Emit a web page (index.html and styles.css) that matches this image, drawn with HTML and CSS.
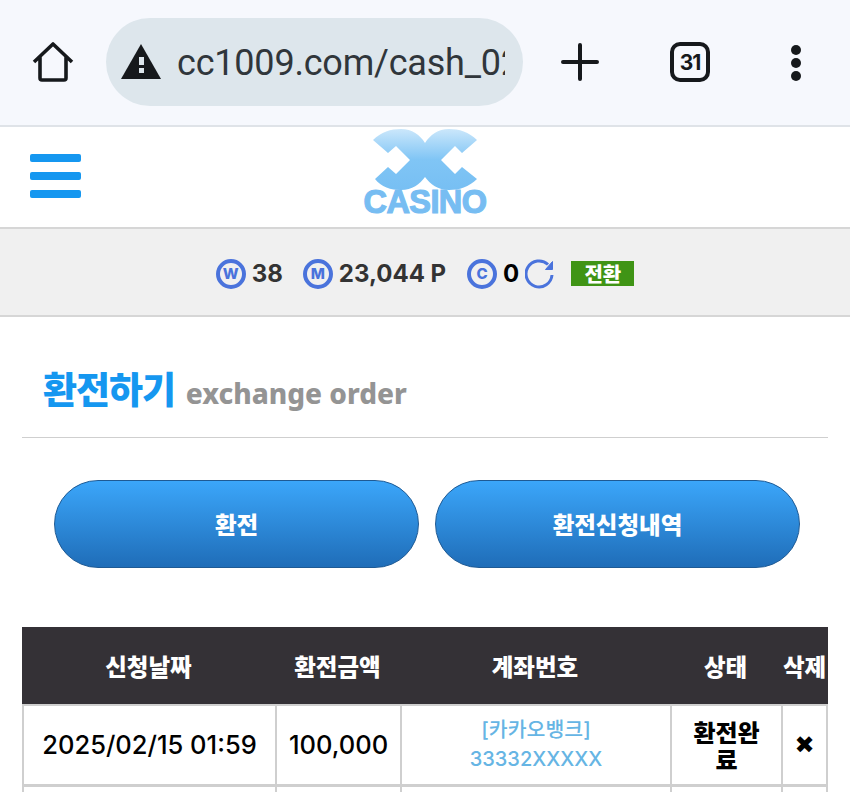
FILE: index.html
```html
<!DOCTYPE html>
<html lang="ko">
<head>
<meta charset="utf-8">
<title>환전하기</title>
<link rel="stylesheet" href="styles.css">
</head>
<body>
<div class="chrome">
  <svg class="ic-home" width="44" height="44" viewBox="0 0 44 44" fill="none" stroke="#16191c" stroke-width="3.6" stroke-linejoin="round"><path d="M3 22 22 4l19 18M9 17v21a2 2 0 0 0 2 2h22a2 2 0 0 0 2-2V17"/></svg>
  <div class="url">
    <svg width="42" height="36" viewBox="0 0 42 36"><path d="M21 0 41 35H1Z" fill="#16191c"/><rect x="19" y="13" width="5" height="8" fill="#dde6ec"/><rect x="19" y="24" width="5" height="5" fill="#dde6ec"/></svg>
    <div class="url-text">cc1009.com/cash_02</div>
  </div>
  <svg class="ic-plus" width="38" height="38" viewBox="0 0 38 38" stroke="#16191c" stroke-width="4" stroke-linecap="round"><path d="M19 2v34M2 19h34"/></svg>
  <div class="tabs">31</div>
  <div class="dots"><i></i><i></i><i></i></div>
</div>
<header class="site-head">
  <div class="burger"><i></i><i></i><i></i></div>
  <div class="logo">
    <svg width="106" height="61" viewBox="0 0 106 61">
      <defs><linearGradient id="lg" x1="0" y1="0" x2="0" y2="1"><stop offset="0" stop-color="#cbe7fb"/><stop offset=".5" stop-color="#80c5f5"/><stop offset="1" stop-color="#77bff3"/></linearGradient></defs>
      <path fill="url(#lg)" d="M1 11C9 3 19 0 29 0 40 0 48 6 53 14 58 6 66 0 77 0 87 0 97 3 105 11L90 24 83 17 69 31 83 45 90 38 105 50C97 58 87 61 77 61 66 61 58 55 53 48 48 55 40 61 29 61 19 61 9 58 3 50L16 38 24 45 38 31 24 17 16 24Z"/>
    </svg>
    <div class="logo-text">CASINO</div>
  </div>
</header>
<div class="wallet">
  <span class="coin">W</span><span class="val">38</span>
  <span class="coin coin-m">M</span><span class="val">23,044 P</span>
  <span class="coin coin-c">C</span><span class="val val-c">0</span>
  <svg class="refresh" width="30" height="30" viewBox="0 0 30 30" fill="none" stroke="#4a73dc" stroke-width="3"><path d="M27 16A13 13 0 1 1 23 5.500"/><path d="M27.500 2.500V10.500H20.500Z" fill="#4a73dc" stroke-width="1" stroke-linejoin="round"/></svg>
  <span class="convert">전환</span>
</div>
<main class="page">
  <h1 class="title"><span class="title-ko">환전하기</span> <span class="title-en">exchange order</span></h1>
  <div class="tabs-row">
    <a class="pill">환전</a>
    <a class="pill">환전신청내역</a>
  </div>
  <table class="grid">
    <colgroup><col class="c1"><col class="c2"><col class="c3"><col class="c4"><col class="c5"></colgroup>
    <thead><tr><th>신청날짜</th><th>환전금액</th><th>계좌번호</th><th>상태</th><th>삭제</th></tr></thead>
    <tbody>
      <tr>
        <td>2025/02/15 01:59</td><td>100,000</td>
        <td class="acct">[카카오뱅크]<br><span class="acct-no">33332XXXXX</span></td>
        <td class="state">환전완료</td><td class="del">✖</td>
      </tr>
      <tr class="next"><td></td><td></td><td></td><td></td><td></td></tr>
    </tbody>
  </table>
</main>
</body>
</html>
```
FILE: styles.css
```css
* { box-sizing: border-box; }
html, body { margin: 0; padding: 0; }
body { width: 850px; height: 792px; overflow: hidden; background: #fff; font-family: Inter, "Noto Sans CJK KR", sans-serif; }

.chrome { height: 127px; background: #f6f8fd; border-bottom: 2px solid #dfe3e8; display: flex; align-items: center; padding: 0 0 1px 31px; }
.ic-home { flex: none; }
.url { margin-left: 31px; width: 417px; height: 88px; border-radius: 44px; background: #dde6ec; display: flex; align-items: center; padding-left: 14px; gap: 15px; overflow: hidden; }
.url-text { font-family: Roboto, sans-serif; font-size: 36px; color: #30363b; width: 328px; overflow: hidden; white-space: nowrap; letter-spacing: -0.2px; padding-top: 2px; }
.ic-plus { margin-left: 38px; flex: none; }
.tabs { margin-left: 71px; width: 40px; height: 40px; border: 4px solid #16191c; border-radius: 10px; font: 700 21px Inter, sans-serif; color: #16191c; display: flex; align-items: center; justify-content: center; letter-spacing: -1px; }
.dots { margin-left: 81px; display: flex; flex-direction: column; gap: 3px; padding-top: 1px; }
.dots i { display: block; width: 10px; height: 10px; border-radius: 50%; background: #16191c; }

.site-head { height: 102px; display: flex; align-items: center; position: relative; padding: 0 0 3px 30px; border-bottom: 2px solid #d6d6d6; }
.burger { display: flex; flex-direction: column; gap: 10px; }
.burger i { display: block; width: 51px; height: 8px; border-radius: 2px; background: #1597f0; }
.logo { position: absolute; left: 360px; top: 2px; width: 130px; display: flex; flex-direction: column; align-items: center; }
.logo-text { font: 700 32.500px/25px "Liberation Sans", sans-serif; color: #77bdf2; -webkit-text-stroke: 1.2px #77bdf2; letter-spacing: -0.6px; white-space: nowrap; }

.wallet { height: 88px; background: #f0f0f0; border-bottom: 2px solid #d6d6d6; display: flex; align-items: center; justify-content: center; padding: 3px 0 0 0; }
.coin { width: 30px; height: 30px; border: 4px solid #4a73dc; border-radius: 50%; color: #4a73dc; font: 800 15px/1 Inter, sans-serif; display: flex; align-items: center; justify-content: center; }
.coin-m { margin-left: 20px; }
.coin-c { margin-left: 21px; }
.val { margin-left: 6px; font-size: 24px; font-weight: 700; color: #333; line-height: 1; }
.val-c { color: #000; }
.refresh { margin-left: 6px; }
.convert { margin-left: 16px; width: 63px; height: 25px; background: #3f9415; color: #fff; font: 900 20px/25px "Noto Sans CJK KR", sans-serif; text-align: center; }

.page { padding: 0 22px; }
.title { margin: 0; height: 121px; border-bottom: 1px solid #cfcfcf; padding: 53px 0 0 21px; line-height: 1; white-space: nowrap; }
.title-ko { font: 900 37px/1 "Noto Sans CJK KR", sans-serif; color: #1597f0; letter-spacing: -1px; }
.title-en { font: 800 28px/1 "Noto Sans", sans-serif; color: #949494; margin-left: 3px; }

.tabs-row { display: flex; gap: 16px; padding: 42px 0 0 32px; }
.pill { width: 365px; height: 88px; border-radius: 44px; border: 1px solid #1e5a94; background: linear-gradient(#3ba6fa, #1f6db8); color: #fff; font: 900 23.500px "Noto Sans CJK KR", sans-serif; display: flex; align-items: center; justify-content: center; }

.grid { margin-top: 59px; width: 806px; table-layout: fixed; border-collapse: separate; border-spacing: 0; }
.c1 { width: 253px; } .c2 { width: 125px; } .c3 { width: 270px; } .c4 { width: 111px; } .c5 { width: 47px; }
th { height: 77px; background: #343136; color: #fff; font: 900 23.500px "Noto Sans CJK KR", sans-serif; padding: 0; white-space: nowrap; }
td { height: 80px; border-top: 2px solid #cfcfcf; border-left: 2px solid #cfcfcf; text-align: center; font-size: 25.500px; font-weight: 500; color: #000; padding: 0 0 1px; line-height: 29px; white-space: nowrap; }
td:last-child { border-right: 2px solid #cfcfcf; }
.acct { color: #66b5e4; font-size: 20.500px; font-weight: 500; }
.acct-no { font-size: 20px; }
.state { font: 900 24px/27px "Noto Sans CJK KR", sans-serif; white-space: normal; padding: 0 13px; }
.del { font: 700 24px "DejaVu Sans", sans-serif; }
.next td { border-top-width: 3px; height: 40px; }
```
